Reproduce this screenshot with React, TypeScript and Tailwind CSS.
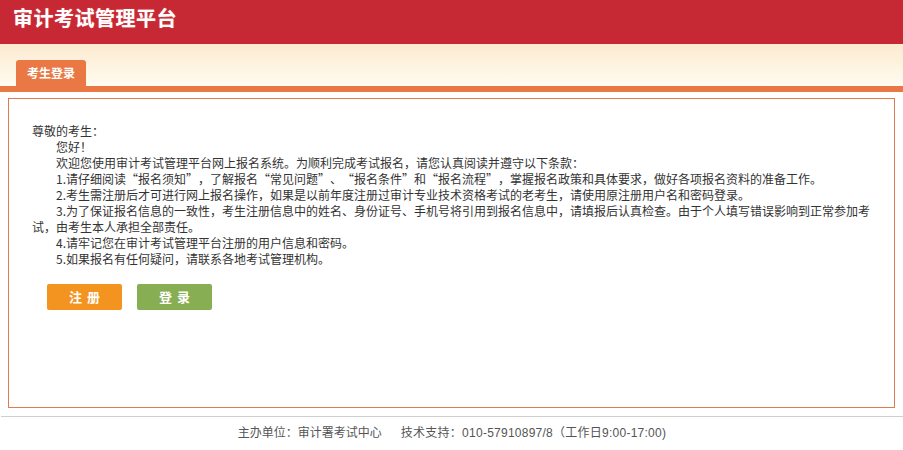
export default function App() {
  const items = [
    "您好！",
    "欢迎您使用审计考试管理平台网上报名系统。为顺利完成考试报名，请您认真阅读并遵守以下条款：",
    "1.请仔细阅读“报名须知”，了解报名“常见问题”、“报名条件”和“报名流程”，掌握报名政策和具体要求，做好各项报名资料的准备工作。",
    "2.考生需注册后才可进行网上报名操作，如果是以前年度注册过审计专业技术资格考试的老考生，请使用原注册用户名和密码登录。",
    "3.为了保证报名信息的一致性，考生注册信息中的姓名、身份证号、手机号将引用到报名信息中，请填报后认真检查。由于个人填写错误影响到正常参加考试，由考生本人承担全部责任。",
    "4.请牢记您在审计考试管理平台注册的用户信息和密码。",
    "5.如果报名有任何疑问，请联系各地考试管理机构。",
  ];

  return (
    <div className="w-[903px] h-[450px] bg-white font-['Noto_Sans_CJK_SC','Liberation_Sans',sans-serif] [text-spacing-trim:space-all] overflow-hidden">
      <header className="h-[44px] bg-[#c72934] pl-[13px] pt-[4px]">
        <h1 className="text-[20px] leading-[28px] font-bold text-white tracking-[0.5px] [text-shadow:0_0_1px_#e88]">
          审计考试管理平台
        </h1>
      </header>

      <div className="h-[42px] bg-gradient-to-b from-[#fcead0] to-[#fffcf0] flex items-end pl-[16px]">
        <div className="w-[70px] h-[26px] rounded-t-[3px] bg-[#e97845] flex items-center justify-center text-white text-[12px] font-bold">
          考生登录
        </div>
      </div>
      <div className="h-[6px] bg-[#e97845]" />

      <main className="mx-[8px] mt-[6px] h-[310px] border border-[#e07a50] px-[23px] pt-[24px]">
        <div className="text-[12px] leading-[16px] text-[#333]">
          <p>尊敬的考生：</p>
          {items.map((t) => (
            <p key={t} className="indent-[24px]">
              {t}
            </p>
          ))}
        </div>
        <div className="flex gap-[15px] mt-[17px] pl-[15px]">
          <button className="w-[75px] h-[26px] rounded-[2px] bg-[#f39320] text-white text-[13px] font-bold tracking-[5px] pl-[5px]">
            注册
          </button>
          <button className="w-[75px] h-[26px] rounded-[2px] bg-[#88ae53] text-white text-[13px] font-bold tracking-[5px] pl-[5px]">
            登录
          </button>
        </div>
      </main>

      <footer className="mt-[8px] border-t border-[#cfcfcf] ml-[1px] pt-[8px] text-center text-[12px] leading-[16px] text-[#555] font-['Liberation_Sans','Noto_Sans_CJK_SC',sans-serif]">
        <span>主办单位：审计署考试中心</span>
        <span className="ml-[19px] tracking-[0.25px]">技术支持：010-57910897/8（工作日9:00-17:00)</span>
      </footer>
    </div>
  );
}
